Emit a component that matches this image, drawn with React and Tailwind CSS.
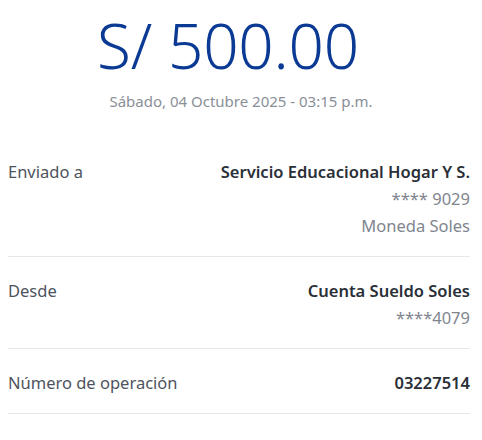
const rows = [
  {
    label: "Enviado a",
    main: "Servicio Educacional Hogar Y S.",
    extra: ["**** 9029", "Moneda Soles"],
  },
  {
    label: "Desde",
    main: "Cuenta Sueldo Soles",
    extra: ["****4079"],
  },
  {
    label: "Número de operación",
    main: "03227514",
    extra: [],
  },
];

export default function App() {
  return (
    <div
      className="h-[440px] w-[482px] overflow-hidden bg-white"
      style={{ fontFamily: '"Noto Sans", sans-serif' }}
    >
      <div className="flex flex-col items-center pt-[6px]">
        <p className="pr-[26px] text-[62px] font-light leading-[78px] tracking-[-0.2px] text-[#0b3a94]">
          S/ 500.00
        </p>
        <p className="mt-[8px] text-[15px] leading-[18px] text-[#8a8f98]">
          Sábado, 04 Octubre 2025 - 03:15 p.m.
        </p>
      </div>
      <div className="mt-[28px] pl-2 pr-3">
        {rows.map((row) => (
          <div
            key={row.label}
            className="flex justify-between border-b border-[#e6e7ea] pt-[21px] pb-[17px]"
          >
            <p className="text-[16.5px] leading-[26px] text-[#4d535d]">
              {row.label}
            </p>
            <div className="flex flex-col items-end">
              <p className="text-[16.5px] font-semibold leading-[26px] text-[#2a2f38]">
                {row.main}
              </p>
              {row.extra.map((t) => (
                <p
                  key={t}
                  className="text-[16.5px] leading-[27px] text-[#80858e]"
                >
                  {t}
                </p>
              ))}
            </div>
          </div>
        ))}
      </div>
    </div>
  );
}
